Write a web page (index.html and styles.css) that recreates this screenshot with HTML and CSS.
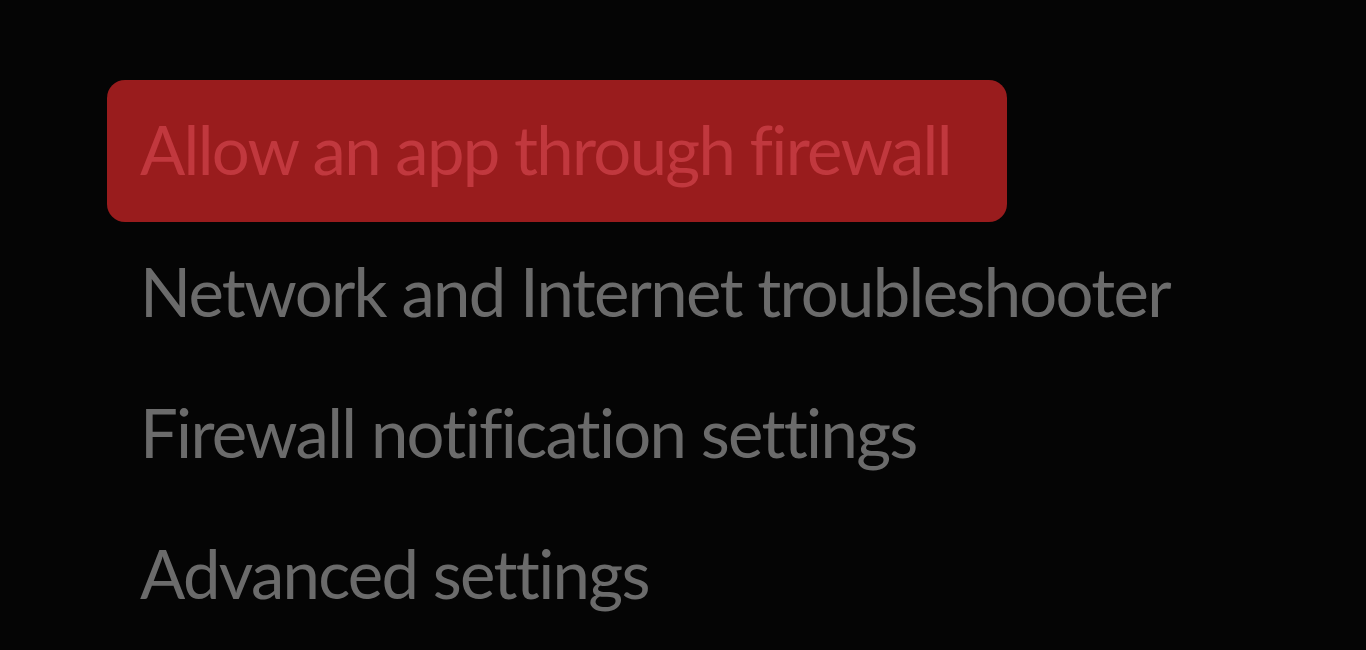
FILE: index.html
```html
<!DOCTYPE html>
<html lang="en">
<head>
  <meta charset="UTF-8">
  <title>Firewall links</title>
  <link rel="stylesheet" href="styles.css">
</head>
<body>
  <!-- Related settings links -->
  <div class="link-list">
    <a class="link-item active" href="#">Allow an app through firewall</a>
    <a class="link-item" href="#">Network and Internet troubleshooter</a>
    <a class="link-item" href="#">Firewall notification settings</a>
    <a class="link-item" href="#">Advanced settings</a>
  </div>
</body>
</html>
```

FILE: styles.css
```css
body {
  margin: 0;
  background-color: #050505;
  font-family: Lato, "Open Sans", sans-serif;
  overflow: hidden;
}

.link-list {
  display: flex;
  flex-direction: column;
  align-items: flex-start;
  padding: 80px 0 0 107px;
}

.link-item {
  display: flex;
  align-items: center;
  box-sizing: border-box;
  width: 900px;
  height: 141px;
  padding: 0 0 4px 33px;
  font-size: 67px;
  letter-spacing: -1.7px;
  font-variant-ligatures: none;
  color: #6b6b6b;
  text-decoration: none;
  white-space: nowrap;
  border-radius: 18px;
}

.link-item.active {
  height: 142px;
  background-color: #991c1d;
  color: #c1383e;
}
```
